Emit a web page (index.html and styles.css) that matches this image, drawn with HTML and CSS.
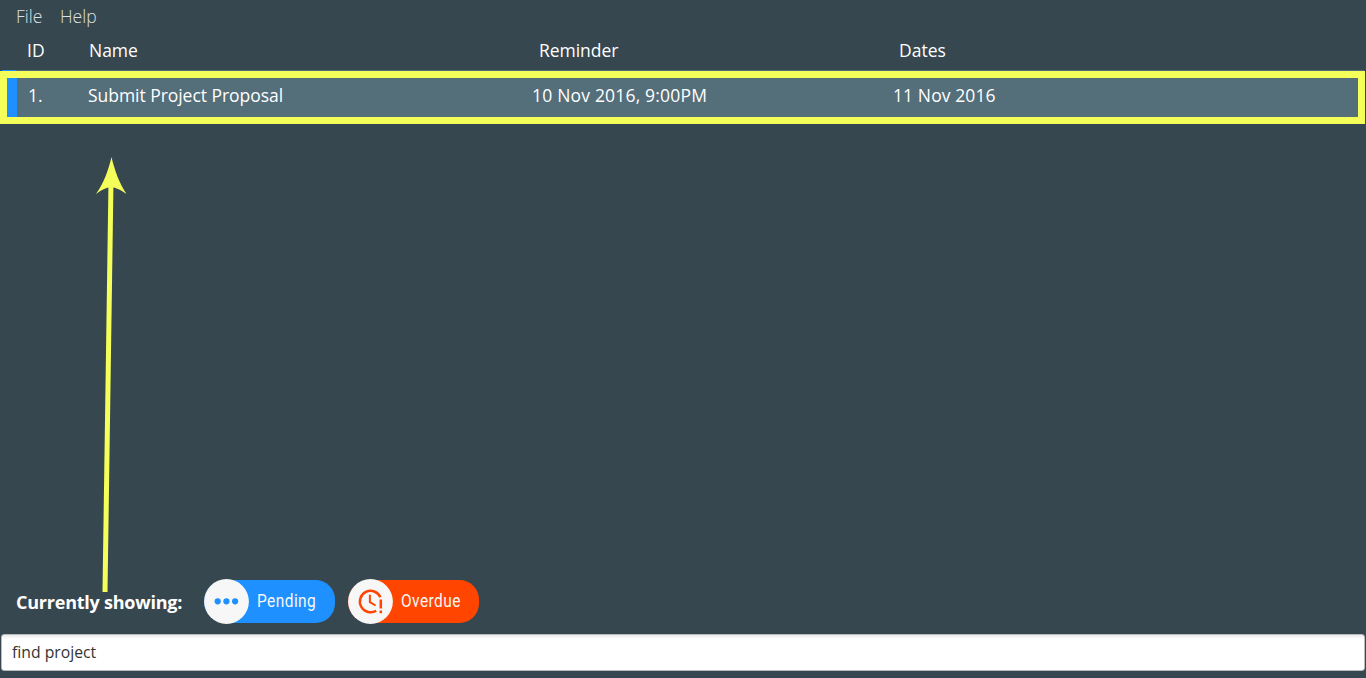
FILE: index.html
```html
<!DOCTYPE html>
<html lang="en">
<head>
<meta charset="utf-8">
<title>Task Manager</title>
<link rel="stylesheet" href="styles.css">
</head>
<body>
<div class="app">
  <nav class="menu"><span class="file">File</span><span class="help">Help</span></nav>
  <main class="tasks">
    <div class="row head">
      <span class="h-id">ID</span><span class="h-name">Name</span><span class="h-reminder">Reminder</span><span class="h-dates">Dates</span>
    </div>
    <div class="row-edge"></div>
    <div class="row task">
      <span class="t-id">1.</span><span class="t-name">Submit Project Proposal</span><span class="t-reminder">10 Nov 2016, 9:00PM</span><span class="t-dates">11 Nov 2016</span>
    </div>
  </main>
  <footer class="status">
    <span class="label">Currently showing:</span>
    <div class="pill pending">
      <svg class="badge" viewBox="0 0 45 45"><circle cx="22.5" cy="22.5" r="22.4" fill="#f7f7f7"/><g fill="#1e90ff"><circle cx="13.7" cy="22.3" r="3.1"/><circle cx="22.4" cy="22.3" r="3.1"/><circle cx="31.1" cy="22.3" r="3.1"/></g></svg>
      <span class="pill-text">Pending</span>
    </div>
    <div class="pill overdue">
      <svg class="badge" viewBox="0 0 45 45"><circle cx="22.5" cy="22.5" r="22.4" fill="#f7f7f7"/><g fill="none" stroke="#ff4500" stroke-width="2.5"><path d="M32.4 18.3A10.7 10.7 0 1 0 28.2 31.7"/><path d="M21.9 15.8v7.3l5.7 3.4" stroke-width="2"/><path d="M32.8 20.5v9M32.8 31.5v2.8"/></g></svg>
      <span class="pill-text">Overdue</span>
    </div>
  </footer>
  <div class="command">find project</div>
  <svg class="arrow" viewBox="0 0 40 450"><path d="M23 36L17 447" stroke="#f5ff5a" stroke-width="5"/><path d="M23.5 12C26.5 25 31.5 39 38.5 49Q30.5 43 23 42Q15.5 43 8 49C15.5 39 20.5 25 23.5 12Z" fill="#f5ff5a"/></svg>
</div>
</body>
</html>
```
FILE: styles.css
```css
* { box-sizing: border-box; }
body { margin: 0; background: #37474f; }
.app { position: relative; display: flex; flex-direction: column; width: 100%; height: 678px; overflow: hidden; font-family: "Open Sans", "Noto Sans", sans-serif; color: #fff; white-space: nowrap; }
.menu { display: flex; height: 32px; padding-left: 16px; font-size: 17.5px; font-weight: 300; line-height: 33px; color: #dce1e3; }
.menu .file { width: 44px; }
.tasks { height: 547px; }
.row { display: grid; font-size: 17.5px; }
.head { grid-template-columns: 62px 450px 360px 1fr; height: 38px; padding-left: 27px; line-height: 37px; }
.h-name, .h-reminder, .t-name { letter-spacing: -0.04px; }
.t-reminder { letter-spacing: 0.19px; }
.t-dates { letter-spacing: 0.1px; }
.row-edge { width: 1362px; height: 1px; margin-left: 2px; background: linear-gradient(90deg, #1e90ff 14px, #546e7a 14px); }
.task { grid-template-columns: 60px 444px 361px 1fr; width: 1365px; height: 53px; padding-left: 21px; line-height: 35px; border: 7px solid #f5ff5a; background: linear-gradient(90deg, #1e90ff 10px, #546e7a 10px); }
.status { display: flex; height: 45px; padding-left: 16px; }
.label { width: 188px; font-size: 18px; font-weight: 700; line-height: 47px; letter-spacing: -0.23px; }
.pill { position: relative; display: flex; width: 131px; height: 43px; margin: 1px 13px 0 0; padding-left: 53px; border-radius: 22px 20px 20px 22px; font-family: Roboto, sans-serif; font-size: 18px; line-height: 41px; color: #f7f7f7; }
.badge { position: absolute; left: 0; top: -1px; width: 45px; height: 45px; }
.pill-text { transform: scale(.86, 1.03); transform-origin: left; letter-spacing: 0.5px; }
.pending { background: #1e90ff; }
.overdue { background: #ff4500; }
.command { width: 1364px; height: 37px; margin: 10px 0 0 1px; padding-left: 10px; border: 1px solid #babbbc; border-radius: 3px; background: linear-gradient(#ececec, #fff 4px); color: #333; font-size: 15.75px; line-height: 35px; }
.arrow { position: absolute; left: 88px; top: 145px; width: 40px; height: 450px; }
```
